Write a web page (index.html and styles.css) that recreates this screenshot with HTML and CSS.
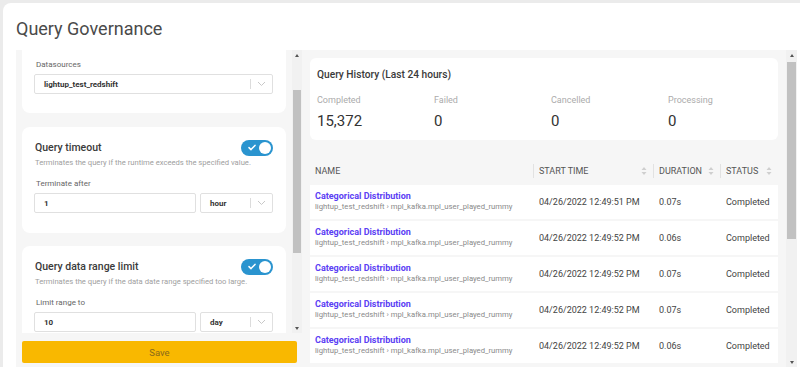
FILE: index.html
```html
<!DOCTYPE html>
<html>
<head>
<meta charset="utf-8">
<link rel="stylesheet" href="styles.css">
</head>
<body>
<div class="page">
  <h1 class="title">Query Governance</h1>
  <div class="main">
    <div class="left">
      <div class="left-scroll">
        <div class="left-content">
          <div class="card card-clipped">
            <div class="field-label">Datasources</div>
            <div class="select select-full">
              <span class="select-text">lightup_test_redshift</span>
              <span class="select-sep"></span>
              <svg class="chev" width="9" height="6" viewBox="0 0 9 6"><path d="M1 1l3.5 3.5L8 1" fill="none" stroke="#c8c8c8" stroke-width="1"/></svg>
            </div>
          </div>
          <div class="card">
            <div class="card-head">
              <span class="card-title">Query timeout</span>
              <span class="toggle">
                <svg class="check" width="8" height="7" viewBox="0 0 8 7"><path d="M1 3.6l2 2L7 1.4" fill="none" stroke="#fff" stroke-width="1.5" stroke-linecap="round" stroke-linejoin="round"/></svg>
                <span class="knob"></span>
              </span>
            </div>
            <div class="card-desc">Terminates the query if the runtime exceeds the specified value.</div>
            <div class="field-label gap">Terminate after</div>
            <div class="input-row">
              <div class="input">1</div>
              <div class="select select-unit">
                <span class="select-text">hour</span>
                <span class="select-sep"></span>
                <svg class="chev" width="9" height="6" viewBox="0 0 9 6"><path d="M1 1l3.5 3.5L8 1" fill="none" stroke="#c8c8c8" stroke-width="1"/></svg>
              </div>
            </div>
          </div>
          <div class="card card-last">
            <div class="card-head">
              <span class="card-title">Query data range limit</span>
              <span class="toggle">
                <svg class="check" width="8" height="7" viewBox="0 0 8 7"><path d="M1 3.6l2 2L7 1.4" fill="none" stroke="#fff" stroke-width="1.5" stroke-linecap="round" stroke-linejoin="round"/></svg>
                <span class="knob"></span>
              </span>
            </div>
            <div class="card-desc">Terminates the query if the data date range specified too large.</div>
            <div class="field-label gap">Limit range to</div>
            <div class="input-row">
              <div class="input">10</div>
              <div class="select select-unit">
                <span class="select-text">day</span>
                <span class="select-sep"></span>
                <svg class="chev" width="9" height="6" viewBox="0 0 9 6"><path d="M1 1l3.5 3.5L8 1" fill="none" stroke="#c8c8c8" stroke-width="1"/></svg>
              </div>
            </div>
          </div>
        </div>
        <div class="vscroll vscroll-left">
          <span class="arrow arrow-up"></span>
          <div class="track"><div class="thumb thumb-left"></div></div>
          <span class="arrow arrow-down"></span>
        </div>
      </div>
      <div class="save-bar">
        <button class="save">Save</button>
      </div>
    </div>

    <div class="right">
      <div class="right-content">
        <div class="summary">
          <div class="summary-title">Query History (Last 24 hours)</div>
          <div class="stats">
            <div class="stat"><div class="stat-label">Completed</div><div class="stat-value">15,372</div></div>
            <div class="stat"><div class="stat-label">Failed</div><div class="stat-value">0</div></div>
            <div class="stat"><div class="stat-label">Cancelled</div><div class="stat-value">0</div></div>
            <div class="stat"><div class="stat-label">Processing</div><div class="stat-value">0</div></div>
          </div>
        </div>

        <div class="table">
          <div class="thead">
            <div class="th th-first"><span class="th-label">NAME</span></div>
            <div class="th"><span class="th-sep"></span><span class="th-label">START TIME</span><svg class="sort" width="6" height="10" viewBox="0 0 6 10"><path d="M3 1L5.5 4H0.5Z M3 9L0.5 6H5.5Z" fill="#cfcfcf"/></svg></div>
            <div class="th"><span class="th-sep"></span><span class="th-label">DURATION</span><svg class="sort" width="6" height="10" viewBox="0 0 6 10"><path d="M3 1L5.5 4H0.5Z M3 9L0.5 6H5.5Z" fill="#cfcfcf"/></svg></div>
            <div class="th"><span class="th-sep"></span><span class="th-label">STATUS</span><svg class="sort" width="6" height="10" viewBox="0 0 6 10"><path d="M3 1L5.5 4H0.5Z M3 9L0.5 6H5.5Z" fill="#cfcfcf"/></svg></div>
          </div>
          <div class="tr">
            <div class="td td-name"><div class="q-name">Categorical Distribution</div><div class="q-path">lightup_test_redshift › mpl_kafka.mpl_user_played_rummy</div></div>
            <div class="td">04/26/2022 12:49:51 PM</div>
            <div class="td">0.07s</div>
            <div class="td">Completed</div>
          </div>
          <div class="tr">
            <div class="td td-name"><div class="q-name">Categorical Distribution</div><div class="q-path">lightup_test_redshift › mpl_kafka.mpl_user_played_rummy</div></div>
            <div class="td">04/26/2022 12:49:52 PM</div>
            <div class="td">0.06s</div>
            <div class="td">Completed</div>
          </div>
          <div class="tr">
            <div class="td td-name"><div class="q-name">Categorical Distribution</div><div class="q-path">lightup_test_redshift › mpl_kafka.mpl_user_played_rummy</div></div>
            <div class="td">04/26/2022 12:49:52 PM</div>
            <div class="td">0.07s</div>
            <div class="td">Completed</div>
          </div>
          <div class="tr">
            <div class="td td-name"><div class="q-name">Categorical Distribution</div><div class="q-path">lightup_test_redshift › mpl_kafka.mpl_user_played_rummy</div></div>
            <div class="td">04/26/2022 12:49:52 PM</div>
            <div class="td">0.07s</div>
            <div class="td">Completed</div>
          </div>
          <div class="tr">
            <div class="td td-name"><div class="q-name">Categorical Distribution</div><div class="q-path">lightup_test_redshift › mpl_kafka.mpl_user_played_rummy</div></div>
            <div class="td">04/26/2022 12:49:52 PM</div>
            <div class="td">0.06s</div>
            <div class="td">Completed</div>
          </div>
        </div>
      </div>
      <div class="vscroll vscroll-right">
        <span class="arrow arrow-up"></span>
        <div class="track"><div class="thumb thumb-right"></div></div>
        <span class="arrow arrow-down"></span>
      </div>
    </div>
  </div>
</div>
</body>
</html>
```

FILE: styles.css
```css
* { box-sizing: border-box; }

html, body {
  margin: 0;
  padding: 0;
  height: 367px;
  overflow: hidden;
}

body {
  background: #ebebeb;
  font-family: Roboto, "Liberation Sans", Arial, sans-serif;
  color: #333;
}

.page {
  margin: 3px 0 0 3px;
  height: 364px;
  background: #fff;
  border-radius: 8px 0 0 0;
  overflow: hidden;
}

.title {
  margin: 0;
  padding: 15px 0 10px 13px;
  font-size: 18px;
  line-height: 22px;
  font-weight: 400;
  color: #4a4a4a;
}

.main {
  display: flex;
  height: 317px;
  padding-left: 13px;
}

/* ---------- left column ---------- */
.left {
  width: 286px;
  flex: none;
  display: flex;
  flex-direction: column;
  background: #f6f6f6;
}

.left-scroll {
  display: flex;
  height: 283px;
  overflow: hidden;
}

.left-content {
  flex: 1;
  padding: 0 6px;
  display: flex;
  flex-direction: column;
  gap: 14px;
  overflow: hidden;
}

.card {
  flex: none;
  background: #fff;
  border-radius: 8px;
  padding: 12px 13px 20px 12px;
}

.card-clipped {
  border-radius: 0 0 8px 8px;
  padding: 10px 13px 19px 12px;
}

.card-last {
  margin-top: -1px;
}

.card-head {
  display: flex;
  align-items: center;
  justify-content: space-between;
  height: 16px;
  padding-left: 1px;
}

.card-title {
  font-size: 10.5px;
  font-weight: 500;
  color: #3a3a3a;
}

.toggle {
  width: 32px;
  height: 16px;
  border-radius: 8px;
  background: #2a94cf;
  display: flex;
  align-items: center;
  justify-content: space-between;
  padding: 0 2px 0 7px;
  margin-top: 1px;
}

.check { display: block; }

.knob {
  width: 12px;
  height: 12px;
  border-radius: 50%;
  background: #fff;
}

.card-desc {
  margin-top: 3px;
  padding-left: 1px;
  font-size: 7.65px;
  line-height: 10px;
  color: #a0a0a0;
  white-space: nowrap;
}

.field-label {
  font-size: 8px;
  line-height: 10px;
  color: #666;
  padding-left: 2px;
}

.field-label.gap { margin-top: 11px; }

.input-row {
  display: flex;
  gap: 4px;
  margin-top: 4px;
}

.input, .select {
  height: 20px;
  border: 1px solid #e0e0e0;
  border-radius: 2px;
  background: #fff;
  display: flex;
  align-items: center;
  font-size: 8px;
  font-weight: 700;
  color: #333;
}

.select-full { margin-top: 4px; }

.input {
  flex: 1;
  padding-left: 9px;
}

.select { padding-left: 9px; }

.select-unit { width: 73px; flex: none; }

.select-text { flex: 1; }

.select-sep {
  width: 1px;
  height: 10px;
  background: #dcdcdc;
  margin-right: 6px;
}

.chev { display: block; margin-right: 6px; }

.save-bar {
  padding: 8px 5px 0 6px;
}

.save {
  display: block;
  width: 100%;
  height: 22px;
  border: none;
  border-radius: 2px;
  background: #f9b800;
  font-family: Roboto, "Liberation Sans", Arial, sans-serif;
  font-size: 9.5px;
  color: #8a6a1a;
  padding: 0;
}

/* ---------- scrollbars ---------- */
.vscroll {
  flex: none;
  display: flex;
  flex-direction: column;
  align-items: center;
  background: #f1f1f1;
}

.vscroll-left { width: 10px; }
.vscroll-right { width: 11px; }

.arrow {
  height: 10px;
  width: 100%;
  display: flex;
  align-items: center;
  justify-content: center;
}

.arrow-up::before {
  content: "";
  border-left: 2.5px solid transparent;
  border-right: 2.5px solid transparent;
  border-bottom: 3px solid #555;
}

.arrow-down::before {
  content: "";
  border-left: 2.5px solid transparent;
  border-right: 2.5px solid transparent;
  border-top: 3px solid #555;
}

.track {
  flex: 1;
  width: 100%;
  padding: 0 1px;
}

.thumb {
  background: #c1c1c1;
  width: 100%;
}

.thumb-left { margin-top: 30px; height: 163px; }
.thumb-right { margin-top: 2px; height: 177px; }

/* ---------- right column ---------- */
.right {
  width: 495px;
  flex: none;
  display: flex;
  background: #f6f6f6;
}

.right-content {
  flex: 1;
  padding: 8px 8px 0 8px;
  overflow: hidden;
}

.summary {
  background: #fff;
  border-radius: 6px;
  height: 82px;
  padding-top: 11px;
}

.summary-title {
  padding-left: 7px;
  font-size: 10.2px;
  line-height: 12px;
  font-weight: 500;
  color: #3a3a3a;
}

.stats {
  display: grid;
  grid-template-columns: repeat(4, 1fr);
  margin-top: 13px;
}

.stat { padding-left: 7px; }

.stat-label {
  font-size: 9px;
  line-height: 12px;
  color: #ababab;
}

.stat-value {
  margin-top: 5px;
  font-size: 15px;
  line-height: 20px;
  color: #333;
}

.table {
  margin-top: 18px;
  display: flex;
  flex-direction: column;
  gap: 2px;
}

.thead, .tr {
  display: grid;
  grid-template-columns: 223px 120px 67px 1fr;
}

.thead {
  height: 26px;
  margin-bottom: -1px;
}

.th {
  display: flex;
  align-items: center;
  font-size: 9px;
  color: #555;
}

.th-first { padding-left: 5px; }

.th-sep {
  width: 1px;
  height: 14px;
  background: #e2e2e2;
  margin-right: 5px;
}

.th-label { flex: 1; }

.sort { display: block; margin-right: 6px; }

.tr {
  background: #fff;
  height: 34px;
}

.td {
  display: flex;
  align-items: center;
  padding-left: 6px;
  font-size: 9px;
  color: #444;
  white-space: nowrap;
}

.td-name {
  flex-direction: column;
  align-items: flex-start;
  justify-content: flex-start;
  padding: 6px 0 0 5px;
}

.q-name {
  font-size: 9px;
  line-height: 11px;
  font-weight: 700;
  color: #5b40f4;
}

.q-path {
  font-size: 7.7px;
  line-height: 10px;
  color: #8a8a8a;
}
```
